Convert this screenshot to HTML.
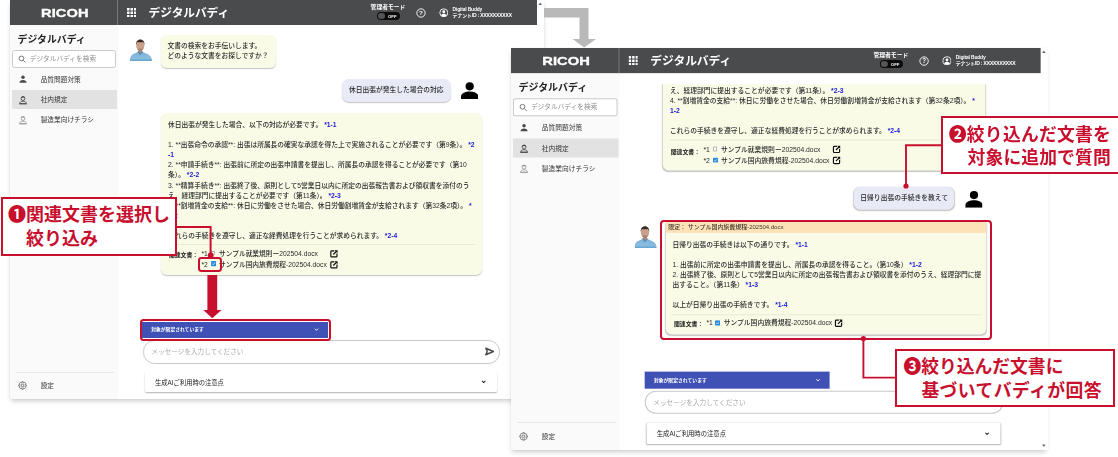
<!DOCTYPE html>
<html lang="ja"><head><meta charset="utf-8"><title>デジタルバディ</title>
<style>
html,body{margin:0;padding:0;background:#fff;}
body{width:1118px;height:457px;position:relative;overflow:hidden;font-family:"Liberation Sans","Noto Sans CJK JP",sans-serif;color:#333;}
.a{position:absolute;}
.scr{will-change:transform;position:absolute;width:533.5px;height:398.5px;background:#fff;transform-origin:0 0;overflow:hidden;}
.shadow{position:absolute;background:#fff;box-shadow:0 3px 5px -1px rgba(0,0,0,.2),0 0 2px rgba(0,0,0,.05);}
.hdr{position:absolute;left:0;top:0;width:527px;height:24.9px;background:#4a4b4d;z-index:5;color:#fff;}
.hdr .dv{position:absolute;left:107.4px;top:0;width:.8px;height:24.7px;background:#777;}
.logo{position:absolute;left:30.6px;top:5.7px;font-weight:bold;font-size:11.5px;line-height:14px;transform-origin:0 50%;transform:scaleX(1.27);letter-spacing:.1px;white-space:nowrap;-webkit-text-stroke:.35px #fff;}
.ttl{position:absolute;left:138.6px;top:4.7px;font-weight:bold;font-size:11.65px;line-height:16px;white-space:nowrap;}
.adm{position:absolute;left:360.6px;top:2.7px;font-weight:bold;font-size:5.8px;line-height:8px;white-space:nowrap;}
.tog{position:absolute;left:367.2px;top:11.9px;width:22.6px;height:8.5px;border-radius:4.3px;background:#0b0b0b;}
.tog i{position:absolute;left:.9px;top:.9px;width:6.7px;height:6.7px;border-radius:50%;background:#555;}
.tog b{position:absolute;left:10.8px;top:1.8px;font-size:4.3px;line-height:5px;color:#fff;font-weight:bold;}
.h1{position:absolute;left:442.6px;top:6.9px;font-size:4.9px;line-height:6px;white-space:nowrap;font-weight:bold;letter-spacing:-.15px;}
.h2{position:absolute;left:442.6px;top:13.3px;font-size:4.9px;line-height:6px;white-space:nowrap;letter-spacing:-.1px;-webkit-text-stroke:.18px #fff;}
.side{position:absolute;left:0;top:24.7px;width:108.2px;height:384px;background:#fafafa;}
.sttl{position:absolute;left:7.5px;top:32.8px;font-weight:bold;font-size:9.9px;line-height:14px;color:#222;white-space:nowrap;}
.srch{position:absolute;left:2px;top:50.3px;width:102.4px;height:16px;border:.6px solid #cbcbcb;border-radius:2.5px;background:#fff;}
.srch span{position:absolute;left:16.8px;top:2.5px;font-size:6.7px;line-height:9px;color:#909090;white-space:nowrap;}
.it{position:absolute;left:2px;width:105.3px;height:19.6px;}
.it.sel{background:#e2e2e2;}
.it span{position:absolute;left:28.7px;top:5.2px;font-size:6.7px;line-height:9px;color:#333;white-space:nowrap;}
.it svg{position:absolute;left:6.4px;top:5.5px;}
.sdv{position:absolute;left:5.6px;top:372.2px;width:98px;height:.6px;background:#e6e6e6;}
.bub{position:absolute;background:#f9fbe7;border-radius:6px;box-shadow:0 1px 1.2px rgba(0,0,0,.24);}
.ubub{position:absolute;background:#e8eaf6;border-radius:7px;box-shadow:0 1px 1.2px rgba(0,0,0,.24);}
.t{position:absolute;font-size:6.74px;line-height:10.12px;white-space:nowrap;color:#2a2a2a;font-weight:500;}
.t b{color:#1a1ad8;font-weight:bold;}
.hr{position:absolute;height:.6px;background:#e9e9d6;}
.rl{position:absolute;font-size:6.74px;line-height:9px;white-space:nowrap;color:#2a2a2a;font-weight:500;}
.rlb{position:absolute;font-size:5.85px;line-height:9px;white-space:nowrap;color:#222;font-weight:bold;}
.cb{position:absolute;width:4.4px;height:4.4px;border-radius:.8px;box-sizing:border-box;}
.cb.off{border:.6px solid #b5b5b5;background:#fff;}
.cb.on{background:#2b8be0;}
.bar{position:absolute;left:132.2px;top:321.6px;width:185.6px;height:16.6px;background:#3f51b5;}
.bar span{position:absolute;left:9px;top:4.6px;font-size:4.8px;line-height:7px;color:#fff;font-weight:bold;white-space:nowrap;}
.inp{position:absolute;left:133.2px;top:340.3px;width:355px;height:21.4px;border:.7px solid #c9c9c9;border-radius:11.5px;background:#fff;}
.inp span{position:absolute;left:7.4px;top:5.6px;font-size:6.6px;line-height:9px;color:#a8a8a8;white-space:nowrap;}
.card{position:absolute;left:135px;top:371.8px;width:352.4px;height:20.6px;background:#fff;border-radius:1.5px;box-shadow:0 1px 1.6px rgba(0,0,0,.3);}
.card span{position:absolute;left:10px;top:6.1px;font-size:6.3px;line-height:9px;color:#222;white-space:nowrap;}
.call{position:absolute;box-sizing:border-box;border:2px solid #c8102e;background:#fff;color:#c8102e;font-weight:bold;white-space:nowrap;font-family:"Liberation Sans","Noto Sans CJK JP",sans-serif;}
.call div{position:absolute;font-size:17.8px;line-height:24px;}
.rbox{position:absolute;box-sizing:border-box;border:2px solid #c8102e;border-radius:3.5px;}
</style></head>
<body>
<div class="shadow" style="left:10px;top:0;width:533.5px;height:398.5px"></div><div class="scr" style="left:10px;top:0"><div class="hdr"><div class="dv"></div><div class="logo">RICOH</div><svg class="a" style="left:116.9px;top:7.8px" width="9.5" height="9.5" viewBox="0 0 9.500 9.500" fill="#fff"><rect x="0.0" y="0.0" width="2.500" height="2.500"/><rect x="0.0" y="3.5" width="2.500" height="2.500"/><rect x="0.0" y="7.0" width="2.500" height="2.500"/><rect x="3.5" y="0.0" width="2.500" height="2.500"/><rect x="3.5" y="3.5" width="2.500" height="2.500"/><rect x="3.5" y="7.0" width="2.500" height="2.500"/><rect x="7.0" y="0.0" width="2.500" height="2.500"/><rect x="7.0" y="3.5" width="2.500" height="2.500"/><rect x="7.0" y="7.0" width="2.500" height="2.500"/></svg><div class="ttl">デジタルバディ</div><div class="adm">管理者モード</div><div class="tog"><i></i><b>OFF</b></div><svg class="a" style="left:405.6px;top:7.500px" width="10" height="10" viewBox="0 0 24 24"><circle cx="12" cy="12" r="10" fill="none" stroke="#fff" stroke-width="2.200"/><text x="12" y="17.500" font-size="15" font-weight="bold" text-anchor="middle" fill="#fff" font-family="Liberation Sans, sans-serif">?</text></svg><svg class="a" style="left:428.6px;top:7.700px" width="9.6" height="9.6" viewBox="0 0 24 24"><circle cx="12" cy="12" r="10" fill="none" stroke="#fff" stroke-width="2.200"/><circle cx="12" cy="9.500" r="3.600" fill="#fff"/><path d="M5 18.500c1.200-3 4-4.200 7-4.200s5.800 1.200 7 4.200c-1.800 2-4.200 3.300-7 3.300s-5.200-1.300-7-3.300z" fill="#fff"/></svg><div class="h1">Digital Buddy</div><div class="h2">テナントID : XXXXXXXXXX</div></div><svg class="a" style="left:528.3px;top:1.500px;z-index:6" width="4.4" height="3.4" viewBox="0 0 10 8"><path d="M5 1l4 6H1z" fill="#666"/></svg><div class="side"></div><div class="sttl">デジタルバディ</div><div class="srch"><svg class="a" style="left:5px;top:3.600px" width="8.4" height="8.4" viewBox="0 0 16 16" fill="none" stroke="#707070" stroke-width="1.800"><circle cx="6.500" cy="6.500" r="4.500"/><path d="M10 10l4.500 4.500"/></svg><span>デジタルバディを検索</span></div><div class="it" style="top:70.2px"><svg style="top:4.300px" width="10" height="10" viewBox="0 0 24 24"><circle cx="12" cy="8" r="4.2" fill="#4a4a4a"/><path d="M3.5 21c0-4.6 4-6.6 8.5-6.6s8.5 2 8.5 6.6z" fill="#4a4a4a"/></svg><span>品質問題対策</span></div><div class="it sel" style="top:89.8px"><svg width="10" height="10" viewBox="0 0 24 24" opacity="1"><path d="M7 8c.3-3.400 2.300-5 5-5s4.700 1.600 5 5c-1.600-1.300-3-1.800-5-1.800S8.600 6.700 7 8z" fill="#444"/><circle cx="12" cy="8.5" r="4.6" fill="none" stroke="#444" stroke-width="2"/><path d="M4 20.5c0-4 3.6-5.6 8-5.6s8 1.6 8 5.6z" fill="none" stroke="#444" stroke-width="2"/><path d="M3 21.5h18" stroke="#444" stroke-width="2"/></svg><span>社内規定</span></div><div class="it" style="top:109.6px"><svg width="10" height="10" viewBox="0 0 24 24" opacity="1"><path d="M7 8c.3-3.400 2.300-5 5-5s4.700 1.600 5 5c-1.600-1.300-3-1.800-5-1.800S8.600 6.700 7 8z" fill="#999"/><circle cx="12" cy="8.5" r="4.6" fill="none" stroke="#999" stroke-width="2"/><path d="M4 20.5c0-4 3.6-5.6 8-5.6s8 1.6 8 5.6z" fill="none" stroke="#999" stroke-width="2"/><path d="M3 21.5h18" stroke="#999" stroke-width="2"/></svg><span>製造業向けチラシ</span></div><div class="sdv"></div><div class="it" style="top:376.2px"><svg style="top:5.300px" width="9" height="9" viewBox="0 0 24 24" fill="none" stroke="#5a5a5a" stroke-width="2.100" stroke-linejoin="round"><path d="M19.39 10.23L22.05 10.25L22.05 13.75L19.39 13.77L18.48 15.97L20.35 17.87L17.87 20.35L15.97 18.48L13.77 19.39L13.75 22.05L10.25 22.05L10.23 19.39L8.03 18.48L6.13 20.35L3.65 17.87L5.52 15.97L4.61 13.77L1.95 13.75L1.95 10.25L4.61 10.23L5.52 8.03L3.65 6.13L6.13 3.65L8.03 5.52L10.23 4.61L10.25 1.95L13.75 1.95L13.77 4.61L15.97 5.52L17.87 3.65L20.35 6.13L18.48 8.03z"/><circle cx="12" cy="12" r="3.400"/></svg><span>設定</span></div><div class="bar" style="margin-top:0px;left:132.2px;width:185.6px"><span>対象が限定されています</span><svg class="a" style="left:171.5px;top:5.8px" width="5" height="5" viewBox="0 0 10 10" fill="none" stroke="#fff" stroke-width="1.900"><path d="M1.800 3.400l3.200 3.200 3.200-3.200"/></svg></div><div class="inp" style="margin-top:0px"><span>メッセージを入力してください</span><svg class="a" style="left:339.4px;top:5px" width="11" height="11" viewBox="0 0 24 24" fill="none" stroke="#4a4a4a" stroke-width="3.200" stroke-linejoin="round"><path d="M4 5L20.500 12 4 19 7 12z"/></svg></div><div class="card" style="margin-top:0px"><span>生成AIご利用時の注意点</span><svg class="a" style="left:335.5px;top:7.6px" width="5.4" height="5.4" viewBox="0 0 10 10" fill="none" stroke="#222" stroke-width="1.900"><path d="M1.800 3.400l3.200 3.200 3.200-3.200"/></svg></div><svg class="a" style="left:119.8px;top:38.7px" width="22" height="22" viewBox="0 0 22 22">
<defs><linearGradient id="sh1" x1="0" y1="0" x2="0" y2="1"><stop offset="0" stop-color="#7fb2d8"/><stop offset="1" stop-color="#8cc0e2"/></linearGradient></defs>
<path d="M0 22v-2.200c.300-2.600 2.200-4.300 4.600-5.200l3.600-1.800h4.200l3.600 1.800c2.600.900 5.200 2.600 5.700 5.200L22 22z" fill="url(#sh1)"/>
<path d="M.200 22v-1.600h21.600V22z" fill="#5d9bc9" opacity=".7"/>
<path d="M7.600 12.900l2.700 3.300 2.700-3.300-1-1.400H8.600z" fill="#4c86b3"/>
<path d="M8.700 9.500h3.300v3.200l-1.650 1.900-1.650-1.900z" fill="#b58a72"/>
<ellipse cx="10.300" cy="6.300" rx="4" ry="5.600" fill="#c9a08a"/>
<path d="M6.300 6.300c.200 3.300 1.800 5.600 4 5.600s3.800-2.300 4-5.600c-.500 2-1.100 3.300-1.800 3.800-.600-.500-1.500-.700-2.200-.700s-1.600.200-2.200.700c-.700-.500-1.300-1.800-1.800-3.800z" fill="#8d6a5a" opacity=".55"/>
<path d="M6.100 6.200C5.700 2.600 7.600.400 10.300.400s4.600 2.200 4.200 5.800c-.300-1.900-1-2.800-1.400-3.200-1 .300-4.400.300-5.600 0-.400.400-1.100 1.300-1.400 3.200z" fill="#3a2b27"/>
</svg><div class="bub" style="left:150.6px;top:34.5px;width:115.3px;height:33.4px"><div class="t" style="left:7px;top:6.4px;line-height:10.1px">文書の検索をお手伝いします。<br>どのような文書をお探しですか？</div></div><div class="ubub" style="left:331.5px;top:78.5px;width:109.5px;height:23.3px"><div class="t" style="left:7.6px;top:6.5px">休日出張が発生した場合の対応</div></div><svg class="a" style="left:450.5px;top:82px" width="17.4" height="17" viewBox="0 0 17.400 17">
<circle cx="8.700" cy="4.300" r="4.100" fill="#000"/>
<path d="M0 17v-2.600c0-3.300 4.600-5 8.700-5s8.700 1.700 8.700 5V17z" fill="#000"/></svg><div class="bub" style="left:150.5px;top:113.2px;width:321.1px;height:161.7px"><div class="t" style="left:7.6px;top:6.6px">休日出張が発生した場合、以下の対応が必要です。 <b>*1-1</b><br>&nbsp;<br>1. **出張命令の承認**: 出張は所属長の確実な承認を得た上で実施されることが必要です（第9条）。 <b>*2</b><br><b>-1</b><br>2. **申請手続き**: 出張前に所定の出張申請書を提出し、所属長の承認を得ることが必要です（第10<br>条）。 <b>*2-2</b><br>3. **精算手続き**: 出張終了後、原則として5営業日以内に所定の出張報告書および領収書を添付のう<br>え、経理部門に提出することが必要です（第11条）。 <b>*2-3</b><br>4. **割増賃金の支給**: 休日に労働をさせた場合、休日労働割増賃金が支給されます（第32条2項）。 <b>*</b><br><b>1-2</b><br>&nbsp;<br>これらの手続きを遵守し、適正な経費処理を行うことが求められます。 <b>*2-4</b></div><div class="hr" style="left:7px;top:130.6px;width:307px"></div><div class="rlb" style="left:8.4px;top:138.2px">関連文書：</div><div class="rl" style="left:41px;top:135.6px">*1</div><div class="cb off" style="left:50.6px;top:137.8px"></div><div class="rl" style="left:58.4px;top:135.6px">サンプル就業規則ー202504.docx</div><svg class="a" style="left:168.4px;top:135.6px" width="9.8" height="9.8" viewBox="0 0 24 24" fill="none" stroke="#111" stroke-width="2.900">
<path d="M13 4.500H6.500a2 2 0 0 0-2 2v11a2 2 0 0 0 2 2h11a2 2 0 0 0 2-2V11"/><path d="M13.500 3H21V10.500z" fill="#111" stroke="none"/><path d="M18.500 5.500L10.500 13.500"/></svg><div class="rl" style="left:41px;top:146.5px">*2</div><svg class="a" style="left:50.6px;top:148.3px" width="5.2" height="5.2" viewBox="0 0 10 10"><rect width="10" height="10" rx="1.600" fill="#2b8be0"/><path d="M2.400 5.200l1.900 1.900 3.400-3.800" fill="none" stroke="#fff" stroke-width="1.300"/></svg><div class="rl" style="left:58.4px;top:146.5px">サンプル国内旅費規程-202504.docx</div><svg class="a" style="left:168.4px;top:146.5px" width="9.8" height="9.8" viewBox="0 0 24 24" fill="none" stroke="#111" stroke-width="2.900">
<path d="M13 4.500H6.500a2 2 0 0 0-2 2v11a2 2 0 0 0 2 2h11a2 2 0 0 0 2-2V11"/><path d="M13.500 3H21V10.500z" fill="#111" stroke="none"/><path d="M18.500 5.500L10.500 13.500"/></svg></div></div>
<div class="shadow" style="left:511.3px;top:48px;width:536.2px;height:402px"></div><div class="scr" style="left:511.3px;top:48px;transform:scale(1.005);height:400px"><div class="hdr"><div class="dv"></div><div class="logo">RICOH</div><svg class="a" style="left:116.9px;top:7.8px" width="9.5" height="9.5" viewBox="0 0 9.500 9.500" fill="#fff"><rect x="0.0" y="0.0" width="2.500" height="2.500"/><rect x="0.0" y="3.5" width="2.500" height="2.500"/><rect x="0.0" y="7.0" width="2.500" height="2.500"/><rect x="3.5" y="0.0" width="2.500" height="2.500"/><rect x="3.5" y="3.5" width="2.500" height="2.500"/><rect x="3.5" y="7.0" width="2.500" height="2.500"/><rect x="7.0" y="0.0" width="2.500" height="2.500"/><rect x="7.0" y="3.5" width="2.500" height="2.500"/><rect x="7.0" y="7.0" width="2.500" height="2.500"/></svg><div class="ttl">デジタルバディ</div><div class="adm">管理者モード</div><div class="tog"><i></i><b>OFF</b></div><svg class="a" style="left:405.6px;top:7.500px" width="10" height="10" viewBox="0 0 24 24"><circle cx="12" cy="12" r="10" fill="none" stroke="#fff" stroke-width="2.200"/><text x="12" y="17.500" font-size="15" font-weight="bold" text-anchor="middle" fill="#fff" font-family="Liberation Sans, sans-serif">?</text></svg><svg class="a" style="left:428.6px;top:7.700px" width="9.6" height="9.6" viewBox="0 0 24 24"><circle cx="12" cy="12" r="10" fill="none" stroke="#fff" stroke-width="2.200"/><circle cx="12" cy="9.500" r="3.600" fill="#fff"/><path d="M5 18.500c1.200-3 4-4.200 7-4.200s5.800 1.200 7 4.200c-1.800 2-4.200 3.300-7 3.300s-5.200-1.300-7-3.300z" fill="#fff"/></svg><div class="h1">Digital Buddy</div><div class="h2">テナントID : XXXXXXXXXX</div></div><svg class="a" style="left:528.3px;top:1.500px;z-index:6" width="4.4" height="3.4" viewBox="0 0 10 8"><path d="M5 1l4 6H1z" fill="#666"/></svg><svg class="a" style="left:528.3px;top:394px;z-index:6" width="4.4" height="3.4" viewBox="0 0 10 8"><path d="M5 7l4-6H1z" fill="#666"/></svg><div class="side"></div><div class="sttl">デジタルバディ</div><div class="srch"><svg class="a" style="left:5px;top:3.600px" width="8.4" height="8.4" viewBox="0 0 16 16" fill="none" stroke="#707070" stroke-width="1.800"><circle cx="6.500" cy="6.500" r="4.500"/><path d="M10 10l4.500 4.500"/></svg><span>デジタルバディを検索</span></div><div class="it" style="top:70.2px"><svg style="top:4.300px" width="10" height="10" viewBox="0 0 24 24"><circle cx="12" cy="8" r="4.2" fill="#4a4a4a"/><path d="M3.5 21c0-4.6 4-6.6 8.5-6.6s8.5 2 8.5 6.6z" fill="#4a4a4a"/></svg><span>品質問題対策</span></div><div class="it sel" style="top:89.8px"><svg width="10" height="10" viewBox="0 0 24 24" opacity="1"><path d="M7 8c.3-3.400 2.300-5 5-5s4.700 1.600 5 5c-1.600-1.300-3-1.800-5-1.800S8.600 6.700 7 8z" fill="#444"/><circle cx="12" cy="8.5" r="4.6" fill="none" stroke="#444" stroke-width="2"/><path d="M4 20.5c0-4 3.6-5.6 8-5.6s8 1.6 8 5.6z" fill="none" stroke="#444" stroke-width="2"/><path d="M3 21.5h18" stroke="#444" stroke-width="2"/></svg><span>社内規定</span></div><div class="it" style="top:109.6px"><svg width="10" height="10" viewBox="0 0 24 24" opacity="1"><path d="M7 8c.3-3.400 2.300-5 5-5s4.700 1.600 5 5c-1.600-1.300-3-1.800-5-1.800S8.600 6.700 7 8z" fill="#999"/><circle cx="12" cy="8.5" r="4.6" fill="none" stroke="#999" stroke-width="2"/><path d="M4 20.5c0-4 3.6-5.6 8-5.6s8 1.6 8 5.6z" fill="none" stroke="#999" stroke-width="2"/><path d="M3 21.5h18" stroke="#999" stroke-width="2"/></svg><span>製造業向けチラシ</span></div><div class="sdv"></div><div class="it" style="top:377.09999999999997px"><svg style="top:5.300px" width="9" height="9" viewBox="0 0 24 24" fill="none" stroke="#5a5a5a" stroke-width="2.100" stroke-linejoin="round"><path d="M19.39 10.23L22.05 10.25L22.05 13.75L19.39 13.77L18.48 15.97L20.35 17.87L17.87 20.35L15.97 18.48L13.77 19.39L13.75 22.05L10.25 22.05L10.23 19.39L8.03 18.48L6.13 20.35L3.65 17.87L5.52 15.97L4.61 13.77L1.95 13.75L1.95 10.25L4.61 10.23L5.52 8.03L3.65 6.13L6.13 3.65L8.03 5.52L10.23 4.61L10.25 1.95L13.75 1.95L13.77 4.61L15.97 5.52L17.87 3.65L20.35 6.13L18.48 8.03z"/><circle cx="12" cy="12" r="3.400"/></svg><span>設定</span></div><div class="bar" style="margin-top:0.6px;left:133.2px;width:184px"><span>対象が限定されています</span><svg class="a" style="left:169.9px;top:5.8px" width="5" height="5" viewBox="0 0 10 10" fill="none" stroke="#fff" stroke-width="1.900"><path d="M1.800 3.400l3.200 3.200 3.200-3.200"/></svg></div><div class="inp" style="margin-top:0.7px"><span>メッセージを入力してください</span><svg class="a" style="left:339.4px;top:5px" width="11" height="11" viewBox="0 0 24 24" fill="none" stroke="#4a4a4a" stroke-width="3.200" stroke-linejoin="round"><path d="M4 5L20.500 12 4 19 7 12z"/></svg></div><div class="card" style="margin-top:1.5px"><span>生成AIご利用時の注意点</span><svg class="a" style="left:335.5px;top:7.6px" width="5.4" height="5.4" viewBox="0 0 10 10" fill="none" stroke="#222" stroke-width="1.900"><path d="M1.800 3.400l3.200 3.200 3.200-3.200"/></svg></div><div class="bub" style="left:150.5px;top:-39.7px;width:321.1px;height:161.7px"><div class="t" style="left:7.6px;top:6.6px">&nbsp;<br>&nbsp;<br>&nbsp;<br>&nbsp;<br>&nbsp;<br>&nbsp;<br>&nbsp;<br>え、経理部門に提出することが必要です（第11条）。 <b>*2-3</b><br>4. **割増賃金の支給**: 休日に労働をさせた場合、休日労働割増賃金が支給されます（第32条2項）。 <b>*</b><br><b>1-2</b><br>&nbsp;<br>これらの手続きを遵守し、適正な経費処理を行うことが求められます。 <b>*2-4</b></div><div class="hr" style="left:7px;top:130.6px;width:307px"></div><div class="rlb" style="left:8.4px;top:138.2px">関連文書：</div><div class="rl" style="left:41px;top:135.6px">*1</div><div class="cb off" style="left:50.6px;top:137.8px"></div><div class="rl" style="left:58.4px;top:135.6px">サンプル就業規則ー202504.docx</div><svg class="a" style="left:168.4px;top:135.6px" width="9.8" height="9.8" viewBox="0 0 24 24" fill="none" stroke="#111" stroke-width="2.900">
<path d="M13 4.500H6.500a2 2 0 0 0-2 2v11a2 2 0 0 0 2 2h11a2 2 0 0 0 2-2V11"/><path d="M13.500 3H21V10.500z" fill="#111" stroke="none"/><path d="M18.500 5.500L10.500 13.500"/></svg><div class="rl" style="left:41px;top:146.5px">*2</div><svg class="a" style="left:50.6px;top:148.3px" width="5.2" height="5.2" viewBox="0 0 10 10"><rect width="10" height="10" rx="1.600" fill="#2b8be0"/><path d="M2.400 5.200l1.900 1.900 3.400-3.800" fill="none" stroke="#fff" stroke-width="1.300"/></svg><div class="rl" style="left:58.4px;top:146.5px">サンプル国内旅費規程-202504.docx</div><svg class="a" style="left:168.4px;top:146.5px" width="9.8" height="9.8" viewBox="0 0 24 24" fill="none" stroke="#111" stroke-width="2.900">
<path d="M13 4.500H6.500a2 2 0 0 0-2 2v11a2 2 0 0 0 2 2h11a2 2 0 0 0 2-2V11"/><path d="M13.500 3H21V10.500z" fill="#111" stroke="none"/><path d="M18.500 5.500L10.500 13.500"/></svg></div><div class="a" style="left:108.2px;top:24px;width:419px;height:12.2px;background:#fff"></div><div class="ubub" style="left:341px;top:137.8px;width:100px;height:23.6px"><div class="t" style="left:6.6px;top:6.7px">日帰り出張の手続きを教えて</div></div><svg class="a" style="left:452px;top:142.1px" width="17.4" height="17" viewBox="0 0 17.400 17">
<circle cx="8.700" cy="4.300" r="4.100" fill="#000"/>
<path d="M0 17v-2.600c0-3.300 4.600-5 8.700-5s8.700 1.700 8.700 5V17z" fill="#000"/></svg><svg class="a" style="left:122.6px;top:176.9px" width="22" height="22" viewBox="0 0 22 22">
<defs><linearGradient id="sh2" x1="0" y1="0" x2="0" y2="1"><stop offset="0" stop-color="#7fb2d8"/><stop offset="1" stop-color="#8cc0e2"/></linearGradient></defs>
<path d="M0 22v-2.200c.300-2.600 2.200-4.300 4.600-5.200l3.600-1.800h4.200l3.600 1.800c2.600.900 5.200 2.600 5.700 5.200L22 22z" fill="url(#sh2)"/>
<path d="M.200 22v-1.600h21.600V22z" fill="#5d9bc9" opacity=".7"/>
<path d="M7.600 12.900l2.700 3.300 2.700-3.300-1-1.400H8.600z" fill="#4c86b3"/>
<path d="M8.700 9.500h3.300v3.200l-1.650 1.900-1.650-1.900z" fill="#b58a72"/>
<ellipse cx="10.300" cy="6.300" rx="4" ry="5.600" fill="#c9a08a"/>
<path d="M6.300 6.300c.200 3.300 1.800 5.600 4 5.600s3.800-2.300 4-5.600c-.500 2-1.100 3.300-1.800 3.800-.600-.500-1.500-.700-2.200-.700s-1.600.200-2.200.700c-.700-.500-1.300-1.800-1.800-3.800z" fill="#8d6a5a" opacity=".55"/>
<path d="M6.100 6.200C5.700 2.600 7.600.400 10.300.400s4.600 2.200 4.200 5.800c-.300-1.900-1-2.800-1.400-3.200-1 .300-4.400.300-5.600 0-.400.400-1.100 1.300-1.400 3.200z" fill="#3a2b27"/>
</svg><div class="bub" style="left:153.8px;top:173.4px;width:319.6px;height:111.5px;overflow:hidden;border-radius:3px 3px 6px 6px"><div class="a" style="left:0;top:0;width:100%;height:10.4px;background:#fde2b8"></div><div class="a" style="left:2.6px;top:1.4px;font-size:5.95px;line-height:7px;color:#3f352b;font-weight:500;white-space:nowrap">限定： サンプル国内旅費規程-202504.docx</div><div class="t" style="left:6.8px;top:17.3px">日帰り出張の手続きは以下の通りです。 <b>*1-1</b><br>&nbsp;<br>1. 出張前に所定の出張申請書を提出し、所属長の承認を得ること。（第10条） <b>*1-2</b><br>2. 出張終了後、原則として5営業日以内に所定の出張報告書および領収書を添付のうえ、経理部門に提<br>出すること。（第11条） <b>*1-3</b><br>&nbsp;<br>以上が日帰り出張の手続きです。 <b>*1-4</b></div><div class="hr" style="left:5px;top:91.4px;width:310px"></div><div class="rlb" style="left:8.3px;top:97.7px">関連文書：</div><div class="rl" style="left:40.7px;top:95.9px">*1</div><svg class="a" style="left:49.3px;top:98px" width="5.2" height="5.2" viewBox="0 0 10 10"><rect width="10" height="10" rx="1.600" fill="#2b8be0"/><path d="M2.400 5.200l1.900 1.900 3.400-3.800" fill="none" stroke="#fff" stroke-width="1.300"/></svg><div class="rl" style="left:57.9px;top:95.9px">サンプル国内旅費規程-202504.docx</div><svg class="a" style="left:167.7px;top:95.5px" width="9.8" height="9.8" viewBox="0 0 24 24" fill="none" stroke="#111" stroke-width="2.900">
<path d="M13 4.500H6.500a2 2 0 0 0-2 2v11a2 2 0 0 0 2 2h11a2 2 0 0 0 2-2V11"/><path d="M13.500 3H21V10.500z" fill="#111" stroke="none"/><path d="M18.500 5.500L10.500 13.500"/></svg></div></div>
<svg class="a" style="left:540px;top:4px" width="62" height="46" viewBox="540 4 62 46"><path d="M544 8H588.500V39H596L584.200 47.600 572.500 39H579.500V17.500H544z" fill="#b9b9b9"/></svg><svg class="a" style="left:0;top:0" width="1118" height="457" viewBox="0 0 1118 457" fill="none" stroke="#c8102e">
<path d="M174 227H210.600V255" stroke-width="2"/>
<circle cx="210.700" cy="255.500" r="2.900" fill="#c8102e" stroke="none"/>
<path d="M207.400 275V310H203.300L212.300 318.200 221.500 310H217.200V275z" fill="#c8102e" stroke="none"/>
<path d="M942 145.300H906V186" stroke-width="1.900"/>
<circle cx="906" cy="186" r="2.600" fill="#c8102e" stroke="none"/>
<path d="M863.400 338.600V377.600H896" stroke-width="1.900"/>
<circle cx="863.400" cy="338.600" r="2.600" fill="#c8102e" stroke="none"/>
</svg><div class="rbox" style="left:198.2px;top:256.9px;width:23.8px;height:14.9px;border-radius:3.4px"></div><div class="rbox" style="left:139.6px;top:319.2px;width:191.4px;height:21.4px"></div><div class="rbox" style="left:659.8px;top:219.9px;width:331.8px;height:119.7px;border-radius:4px"></div><div class="call" style="left:.6px;top:197.4px;width:176.2px;height:58.3px"><div style="left:5.400px;top:3.300px;font-size:18px">❶関連文書を選択し</div><div style="left:23.400px;top:27.700px;font-size:18px">絞り込み</div></div><div class="call" style="left:941.4px;top:116.2px;width:180px;height:58.2px"><div style="left:5.400px;top:5px;letter-spacing:.25px">❷絞り込んだ文書を</div><div style="left:24.200px;top:28.200px;letter-spacing:.12px">対象に追加で質問</div></div><div class="call" style="left:895.4px;top:348.8px;width:219.2px;height:58.4px"><div style="left:6px;top:4.200px">❸絞り込んだ文書に</div><div style="left:24px;top:27.800px;letter-spacing:.45px">基づいてバディが回答</div></div>
</body></html>
